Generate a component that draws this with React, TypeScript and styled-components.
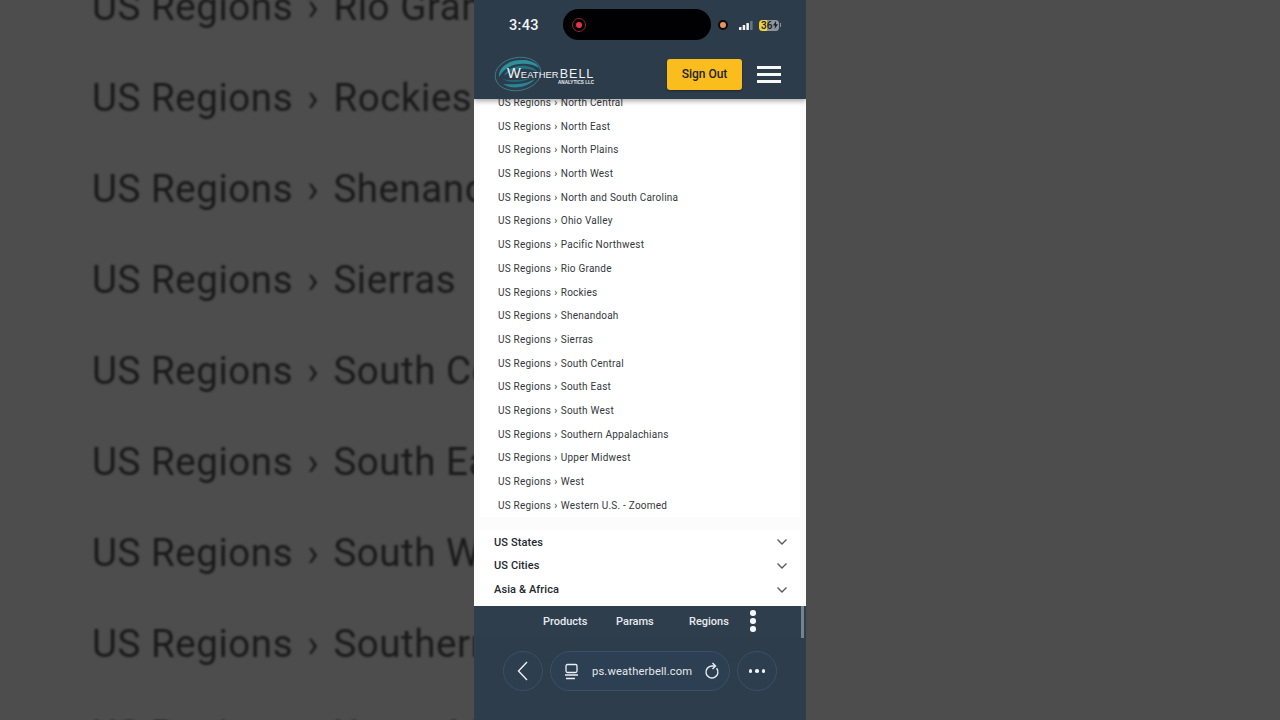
import React from "react";
import styled, { createGlobalStyle } from "styled-components";

const GlobalStyle = createGlobalStyle`
  html, body { margin: 0; padding: 0; height: 100%; background: #4d4d4d; overflow: hidden; }
  #root { height: 100%; }
`;

const Stage = styled.div`
  display: flex;
  width: 1280px;
  height: 720px;
  font-family: Roboto, "Liberation Sans", sans-serif;
`;

const SidePanel = styled.div`
  flex: 1;
  min-width: 0;
  background: #4d4d4d;
  overflow: hidden;
`;

const BlurredList = styled.div`
  margin-top: -39px;
  padding-left: 92px;
  width: 700px;
  filter: blur(1px);
`;

const BlurredRow = styled.div`
  height: 91px;
  line-height: 91px;
  font-size: 38.5px;
  letter-spacing: 0.55px;
  color: #1a1a1b;
  white-space: nowrap;
`;

const BigSep = styled.span`
  margin: 0 4px;
`;

const Phone = styled.div`
  width: 332px;
  flex: none;
  height: 720px;
  display: flex;
  flex-direction: column;
  background: #2e3d4c;
  overflow: hidden;
`;

const TopBar = styled.header`
  flex: none;
  height: 99px;
  background: #2c3c4b;
  box-shadow: 0 2px 5px rgba(0, 0, 0, 0.35);
  position: relative;
  z-index: 2;
  display: flex;
  flex-direction: column;
`;

const StatusRow = styled.div`
  height: 50px;
  display: flex;
  align-items: center;
  padding-left: 35px;
`;

const Clock = styled.span`
  width: 54px;
  font-size: 14.5px;
  font-weight: 500;
  letter-spacing: 0.3px;
  color: #f2f4f5;
`;

const Island = styled.div`
  width: 148px;
  height: 31px;
  margin-top: -1px;
  border-radius: 16px;
  background: #010103;
  display: flex;
  align-items: center;
  padding-left: 9px;
  box-sizing: border-box;
`;

const RecordRing = styled.span`
  width: 14px;
  height: 14px;
  box-sizing: border-box;
  border-radius: 50%;
  border: 1px solid #8c2630;
  display: flex;
  align-items: center;
  justify-content: center;
  &::after {
    content: "";
    width: 6px;
    height: 6px;
    border-radius: 50%;
    background: #e8344a;
  }
`;

const CameraDot = styled.span`
  width: 10px;
  height: 10px;
  margin-left: 7px;
  box-sizing: border-box;
  border-radius: 50%;
  background: #e8935a;
  border: 2px solid #0b0b0d;
`;

const SignalIcon = styled.svg`
  margin-left: 11px;
`;

const Battery = styled.span`
  margin-left: 6px;
  width: 20px;
  height: 11px;
  border-radius: 3.5px;
  background: linear-gradient(90deg, #efd03e 0 40%, #8e949b 40% 100%);
  color: #1d2126;
  font-size: 10px;
  font-weight: 500;
  line-height: 11px;
  padding-left: 2px;
  box-sizing: border-box;
  white-space: nowrap;
  overflow: hidden;
  display: flex;
  align-items: center;
  gap: 0.5px;
`;

const BatteryNub = styled.span`
  width: 1px;
  height: 4px;
  margin-left: 1px;
  background: #8e949b;
`;

const BrandRow = styled.div`
  flex: 1;
  display: flex;
  align-items: center;
  padding: 0 25px 0 20px;
`;

const Logo = styled.div`
  position: relative;
  width: 100px;
  height: 38px;
  margin-top: -2px;
`;

const Swirl = styled.svg`
  position: absolute;
  left: 0;
  top: 0;
`;

const LogoName = styled.div`
  position: absolute;
  left: 13px;
  top: 10px;
  display: flex;
  align-items: baseline;
  color: #f1f5f6;
  white-space: nowrap;
`;

const Weather = styled.span`
  font-family: "Liberation Sans", sans-serif;
  font-size: 9.4px;
  letter-spacing: 0.1px;
  &::first-letter { font-size: 14.5px; }
`;

const Bell = styled.span`
  font-family: "Liberation Sans", sans-serif;
  font-size: 12.5px;
  letter-spacing: 1px;
  margin-left: 1px;
`;

const LogoSub = styled.span`
  position: absolute;
  left: 64px;
  top: 25px;
  font-family: "Liberation Sans", sans-serif;
  font-size: 4.6px;
  font-weight: 700;
  color: #e8ecee;
  white-space: nowrap;
`;

const SignOut = styled.button`
  margin-left: auto;
  width: 75px;
  height: 31px;
  margin-top: -1px;
  border: none;
  border-radius: 3px;
  background: #fbbc1d;
  color: #1c2530;
  font: 500 12px Roboto, sans-serif;
  box-shadow: 0 1px 2px rgba(0, 0, 0, 0.35);
`;

const Burger = styled.div`
  margin-left: 15px;
  width: 24px;
  display: flex;
  flex-direction: column;
  gap: 4px;
  span {
    height: 3px;
    background: #f7f8f8;
  }
`;

const Content = styled.main`
  flex: 1;
  min-height: 0;
  background: #fcfcfc;
  display: flex;
  flex-direction: column;
  overflow: hidden;
  padding: 0 6px;
`;

const RegionList = styled.ul`
  list-style: none;
  margin: -8px 0 0;
  padding: 0 0 0 18px;
  background: #fff;
`;

const RegionRow = styled.li`
  height: 23.7px;
  line-height: 23.7px;
  font-size: 10px;
  letter-spacing: 0.23px;
  color: #33373b;
  white-space: nowrap;
`;

const SmallSep = styled.span`
  margin: 0 0.5px;
`;

const Sections = styled.div`
  margin-top: 13px;
  background: #fff;
  padding-bottom: 5px;
`;

const SectionRow = styled.div`
  height: 23.7px;
  display: flex;
  align-items: center;
  justify-content: space-between;
  padding: 0 12px 0 14px;
  font-size: 11px;
  font-weight: 500;
  letter-spacing: 0.1px;
  color: #23282d;
`;

const TabBar = styled.nav`
  flex: none;
  height: 30px;
  background: #2e3e4d;
  display: flex;
  align-items: center;
  padding-left: 69px;
  position: relative;
`;

const Tab = styled.span<{ $width: number }>`
  width: ${(p) => p.$width}px;
  font-size: 11px;
  font-weight: 500;
  color: #e6eaee;
`;

const DotsColumn = styled.div`
  display: flex;
  flex-direction: column;
  gap: 2.5px;
  margin-left: 2px;
  span {
    width: 5.5px;
    height: 5.5px;
    border-radius: 50%;
    background: #f5f6f7;
  }
`;

const ScrollThumb = styled.span`
  position: absolute;
  right: 2px;
  top: 0;
  width: 3px;
  height: 32px;
  background: #75828f;
`;

const BrowserBar = styled.div`
  flex: none;
  height: 84px;
  box-sizing: border-box;
  background: #2e3d4c;
  display: flex;
  align-items: flex-start;
  padding: 15px 0 0 29px;
  gap: 7px;
`;

const RoundButton = styled.div`
  width: 40px;
  height: 40px;
  box-sizing: border-box;
  border-radius: 50%;
  border: 1px solid #3a5065;
  background: #2d3e4f;
  display: flex;
  align-items: center;
  justify-content: center;
`;

const UrlPill = styled.div`
  width: 180px;
  height: 40px;
  box-sizing: border-box;
  border-radius: 20px;
  border: 1px solid #3a5065;
  background: #2d3f52;
  display: flex;
  align-items: center;
  padding: 0 10px 0 13px;
`;

const UrlText = styled.span`
  width: 101px;
  margin-left: 13px;
  flex: none;
  overflow: hidden;
  white-space: nowrap;
  font-size: 11.2px;
  letter-spacing: 0.15px;
  color: #e4e8ec;
`;

const ReloadIcon = styled.svg`
  margin-left: 11px;
  flex: none;
`;

const MoreDots = styled.div`
  display: flex;
  gap: 3px;
  span {
    width: 3.5px;
    height: 3.5px;
    border-radius: 50%;
    background: #f2f4f5;
  }
`;

const regions = [
  "North Central", "North East", "North Plains", "North West",
  "North and South Carolina", "Ohio Valley", "Pacific Northwest", "Rio Grande",
  "Rockies", "Shenandoah", "Sierras", "South Central", "South East",
  "South West", "Southern Appalachians", "Upper Midwest", "West",
  "Western U.S. - Zoomed",
];

const blurred = [
  "Rio Grande", "Rockies", "Shenandoah", "Sierras", "South Central",
  "South East", "South West", "Southern Appalachians", "Upper Midwest",
];

const Chevron = () => (
  <svg width="12" height="8" viewBox="0 0 12 8" fill="none">
    <path d="M1.5 1.5 6 6l4.5-4.5" stroke="#555b61" strokeWidth="1.4" />
  </svg>
);

function Side({ rows }: { rows: string[] }) {
  return (
    <SidePanel>
      <BlurredList>
        {rows.map((r) => (
          <BlurredRow key={r}>
            US Regions <BigSep>›</BigSep> {r}
          </BlurredRow>
        ))}
      </BlurredList>
    </SidePanel>
  );
}

export default function App() {
  return (
    <Stage>
      <GlobalStyle />
      <Side rows={blurred} />
      <Phone>
        <TopBar>
          <StatusRow>
            <Clock>3:43</Clock>
            <Island>
              <RecordRing />
            </Island>
            <CameraDot />
            <SignalIcon width="14" height="9" viewBox="0 0 14 9">
              <rect x="0" y="6" width="2.5" height="3" rx="0.5" fill="#f4f5f6" />
              <rect x="3.7" y="4" width="2.5" height="5" rx="0.5" fill="#f4f5f6" />
              <rect x="7.4" y="2" width="2.5" height="7" rx="0.5" fill="#f4f5f6" />
              <rect x="11.1" y="0" width="2.5" height="9" rx="0.5" fill="#6c7681" />
            </SignalIcon>
            <Battery>
              36
              <svg width="5" height="8" viewBox="0 0 5 8">
                <path d="M3 0 0 4.6h2L1.6 8 5 3.2H3Z" fill="#1d2126" />
              </svg>
            </Battery>
            <BatteryNub />
          </StatusRow>
          <BrandRow>
            <Logo>
              <Swirl width="50" height="38" viewBox="0 0 50 38" fill="none">
                <ellipse cx="24" cy="19" rx="23" ry="16.5" stroke="#3a7f8b" strokeWidth="0.9" transform="rotate(-10 24 19)" />
                <path d="M5 22C4 12 16 4 30 5 38 5.5 44 9 45 13 38 8 24 7 15 12 10 15 7 18 5 22Z" fill="#2f8f9a" />
                <path d="M10 21C12 14 22 10 32 11 38 12 42 14 43 17 36 13 25 13 18 16 14 18 12 19 10 21Z" fill="#1f7583" />
                <path d="M9 29C17 35 34 33 41 24 33 29 20 30 9 29Z" fill="#2b8590" />
                <path d="M8 24C15 28 28 28 37 23 28 25 17 26 8 24Z" fill="#1c6a77" />
              </Swirl>
              <LogoName>
                <Weather>WEATHER</Weather>
                <Bell>BELL</Bell>
              </LogoName>
              <LogoSub>ANALYTICS LLC</LogoSub>
            </Logo>
            <SignOut>Sign Out</SignOut>
            <Burger>
              <span />
              <span />
              <span />
            </Burger>
          </BrandRow>
        </TopBar>
        <Content>
          <RegionList>
            {regions.map((r) => (
              <RegionRow key={r}>
                US Regions <SmallSep>›</SmallSep> {r}
              </RegionRow>
            ))}
          </RegionList>
          <Sections>
            {["US States", "US Cities", "Asia & Africa"].map((s) => (
              <SectionRow key={s}>
                {s}
                <Chevron />
              </SectionRow>
            ))}
          </Sections>
        </Content>
        <TabBar>
          <Tab $width={73}>Products</Tab>
          <Tab $width={73}>Params</Tab>
          <Tab $width={59}>Regions</Tab>
          <DotsColumn>
            <span />
            <span />
            <span />
          </DotsColumn>
          <ScrollThumb />
        </TabBar>
        <BrowserBar>
          <RoundButton>
            <svg width="14" height="20" viewBox="0 0 14 20" fill="none">
              <path d="M11 1 2.5 10 11 19" stroke="#eef1f3" strokeWidth="1.4" />
            </svg>
          </RoundButton>
          <UrlPill>
            <svg width="15" height="17" viewBox="0 0 15 17" fill="none" stroke="#eef1f3" strokeWidth="1.3" style={{ flex: "none" }}>
              <rect x="2" y="1.5" width="11" height="8" rx="1.5" />
              <path d="M1 12h13M2 15.5h9" />
            </svg>
            <UrlText>ps.weatherbell.com</UrlText>
            <ReloadIcon width="16" height="18" viewBox="0 0 16 18" fill="none">
              <path d="M12.6 6.2A6 6 0 1 1 8 4H11" stroke="#eef1f3" strokeWidth="1.4" />
              <path d="M8.5 1 11.5 4 8.5 7" stroke="#eef1f3" strokeWidth="1.4" />
            </ReloadIcon>
          </UrlPill>
          <RoundButton>
            <MoreDots>
              <span />
              <span />
              <span />
            </MoreDots>
          </RoundButton>
        </BrowserBar>
      </Phone>
      <SidePanel />
    </Stage>
  );
}
